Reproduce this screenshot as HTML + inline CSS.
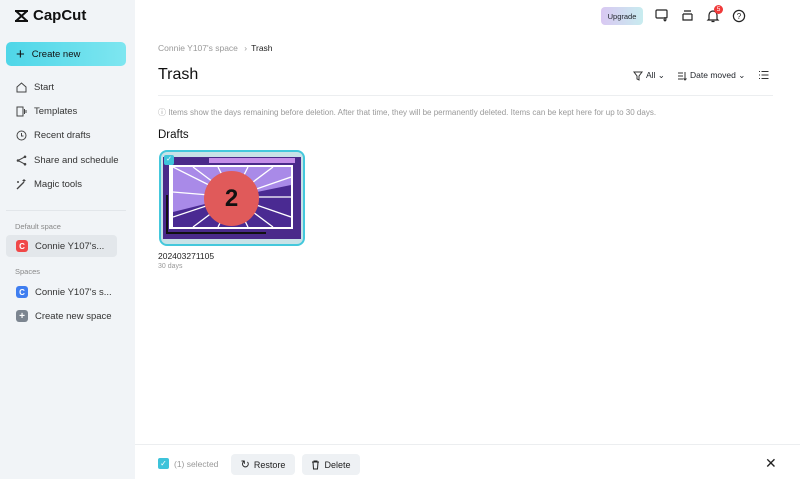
<!DOCTYPE html>
<html><head><style>
*{box-sizing:border-box;margin:0;padding:0}
body{width:800px;height:479px;overflow:hidden;font-family:"Liberation Sans",sans-serif;background:#fff;position:relative;color:#1f2329}
.sb{position:absolute;left:0;top:0;width:135px;height:479px;background:#f1f4f7}
.abs{position:absolute}
.nav{position:absolute;left:16px;font-size:9.5px;color:#333;display:flex;align-items:center}
.nav svg{margin-right:7px}
.sec{position:absolute;left:15px;font-size:7.5px;color:#888}
.av{width:12px;height:12px;border-radius:3px;color:#fff;font-size:8px;font-weight:bold;display:inline-flex;align-items:center;justify-content:center;margin-right:7px}
.btn{position:absolute;top:454px;height:21px;background:#eef1f4;border-radius:4px;font-size:9px;display:flex;align-items:center;justify-content:center;gap:4px;color:#222}
</style></head><body>
<div class="sb">
 <div class="abs" style="left:14px;top:7px;display:flex;align-items:center;font-size:15px;font-weight:bold;color:#111">
  <svg width="15" height="14" viewBox="0 0 15 14"><path d="M1 2h13M1 12h13M2 2l11 10M13 2L2 12" stroke="#111" stroke-width="2" fill="none"/></svg>
  <span style="margin-left:4px">CapCut</span></div>
 <div class="abs" style="left:6px;top:42px;width:120px;height:24px;border-radius:5px;background:linear-gradient(90deg,#4fd6e8,#7ee6f0);font-size:9.5px;display:flex;align-items:center;padding-left:10px;color:#111"><span style="font-size:15px;margin-right:7px;line-height:1">+</span>Create new</div>
 <div class="nav" style="top:82px"><svg width="11" height="11"><path d="M1 5l4.5-4 4.5 4v5H1z" stroke="#444" fill="none"/></svg>Start</div>
 <div class="nav" style="top:106px"><svg width="11" height="11"><rect x="1" y="1" width="6" height="9" stroke="#444" fill="none"/><path d="M8.5 3v5M10 4v3" stroke="#444"/></svg>Templates</div>
 <div class="nav" style="top:130px"><svg width="11" height="11"><circle cx="5.5" cy="5.5" r="4.5" stroke="#444" fill="none"/><path d="M5.5 3v3h2" stroke="#444" fill="none"/></svg>Recent drafts</div>
 <div class="nav" style="top:155px"><svg width="11" height="11"><circle cx="2" cy="5.5" r="1.3" fill="#444"/><circle cx="9" cy="1.8" r="1.3" fill="#444"/><circle cx="9" cy="9.2" r="1.3" fill="#444"/><path d="M2 5.5L9 1.8M2 5.5L9 9.2" stroke="#444"/></svg>Share and schedule</div>
 <div class="nav" style="top:179px"><svg width="11" height="11"><path d="M1 10l7-7" stroke="#444" stroke-width="1.3"/><path d="M8 0v3M6.5 1.5h3M2 2v2M1 3h2" stroke="#444"/></svg>Magic tools</div>
 <div class="abs" style="left:6px;top:210px;width:120px;height:1px;background:#e2e6ea"></div>
 <div class="sec" style="top:222px">Default space</div>
 <div class="abs" style="left:6px;top:235px;width:111px;height:22px;background:#e3e7eb;border-radius:4px"></div>
 <div class="nav" style="top:240px"><span class="av" style="background:#f04848">C</span>Connie Y107's...</div>
 <div class="sec" style="top:267px">Spaces</div>
 <div class="nav" style="top:286px"><span class="av" style="background:#3f7ef0">C</span>Connie Y107's s...</div>
 <div class="nav" style="top:310px"><span class="av" style="background:#7c8590;font-size:10px">+</span>Create new space</div>
</div>

<div class="abs" style="left:601px;top:7px;width:42px;height:18px;border-radius:4px;background:linear-gradient(90deg,#d9c8f2,#c8ecef);font-size:7.5px;display:flex;align-items:center;justify-content:center">Upgrade</div>
<svg class="abs" style="left:655px;top:9px" width="14" height="13"><rect x="1" y="1" width="11" height="8" rx="1" stroke="#222" fill="none" stroke-width="1.2"/><path d="M10 8v4M8.5 10.5l1.5 1.5 1.5-1.5" stroke="#222" fill="none"/></svg>
<svg class="abs" style="left:681px;top:9px" width="13" height="13"><path d="M3 2h7M2 5h9M2 5v6h9V5" stroke="#222" fill="none" stroke-width="1.2"/></svg>
<svg class="abs" style="left:706px;top:9px" width="14" height="14"><path d="M3 10V6a4 4 0 018 0v4l1 1H2zM5.5 12.5h3" stroke="#222" fill="none" stroke-width="1.2"/></svg>
<div class="abs" style="left:714px;top:5px;width:9px;height:9px;border-radius:50%;background:#f03a3a;color:#fff;font-size:6.5px;text-align:center;line-height:9px">5</div>
<svg class="abs" style="left:732px;top:9px" width="14" height="14"><circle cx="7" cy="7" r="5.6" stroke="#222" fill="none" stroke-width="1.2"/><text x="7" y="10" font-size="8" text-anchor="middle" font-family="Liberation Sans" fill="#222">?</text></svg>

<div class="abs" style="left:158px;top:43px;font-size:8.5px;color:#999">Connie Y107's space <span style="margin:0 4px">›</span><span style="color:#222">Trash</span></div>
<div class="abs" style="left:158px;top:66px;font-size:16px;color:#111">Trash</div>
<div class="abs" style="left:633px;top:70px;font-size:8.5px;display:flex;align-items:center;gap:3px"><svg width="10" height="10"><path d="M1 1h8L6 5v4L4 8V5z" stroke="#333" fill="none"/></svg>All ⌄</div>
<div class="abs" style="left:677px;top:70px;font-size:8.5px;display:flex;align-items:center;gap:3px"><svg width="10" height="10"><path d="M1 2h5M1 5h5M1 8h5M8 1v8M6.5 7.5L8 9l1.5-1.5" stroke="#333" fill="none"/></svg>Date moved ⌄</div>
<svg class="abs" style="left:758px;top:70px" width="11" height="10"><path d="M1 1.5h1M1 5h1M1 8.5h1M3.5 1.5h7M3.5 5h7M3.5 8.5h7" stroke="#333"/></svg>
<div class="abs" style="left:158px;top:95px;width:615px;height:1px;background:#eceef0"></div>
<div class="abs" style="left:158px;top:107px;font-size:8px;color:#999">ⓘ Items show the days remaining before deletion. After that time, they will be permanently deleted. Items can be kept here for up to 30 days.</div>
<div class="abs" style="left:158px;top:129px;font-size:11.5px;color:#111">Drafts</div>

<div class="abs" style="left:159px;top:150px;width:146px;height:96px;border:2px solid #44c8dc;border-radius:8px;background:#c8e2e7;overflow:hidden">
 <div class="abs" style="left:2px;top:5px;width:138px;height:82px;background:#4a2a8a"></div>
 <div class="abs" style="left:48px;top:6px;width:86px;height:5px;background:#c48ee8"></div>
 <div class="abs" style="left:8px;top:13px;width:124px;height:64px;background:#fff"></div>
 <svg class="abs" style="left:12px;top:15px" width="118" height="60"><rect width="118" height="60" fill="#4a2a92"/>
 <path d="M0 0h118v18L60 30 0 45z" fill="#a98ae8"/>
 <g stroke="#fff" stroke-width="1.3"><path d="M60 30L0 0M60 30L20 0M60 30L45 0M60 30L75 0M60 30L100 0M60 30L118 10M60 30L118 30M60 30L118 50M60 30L100 60M60 30L75 60M60 30L45 60M60 30L20 60M60 30L0 50M60 30L0 25"/></g></svg>
 <div class="abs" style="left:5px;top:43px;width:2px;height:38px;background:#111"></div>
 <div class="abs" style="left:5px;top:80px;width:100px;height:2px;background:#111"></div>
 <div class="abs" style="left:43px;top:19px;width:55px;height:55px;border-radius:50%;background:#e05a5a;font-size:24px;font-weight:bold;text-align:center;line-height:55px;color:#111">2</div>
 <div class="abs" style="left:3px;top:3px;width:10px;height:10px;border-radius:2px;background:#3ec3da;color:#fff;font-size:7px;text-align:center;line-height:10px">✓</div>
</div>
<div class="abs" style="left:158px;top:251px;font-size:8.5px;color:#222">202403271105</div>
<div class="abs" style="left:158px;top:263px;font-size:7px;color:#999">30 days</div>

<div class="abs" style="left:135px;top:444px;width:665px;height:1px;background:#eceef0"></div>
<div class="abs" style="left:158px;top:458px;width:11px;height:11px;border-radius:2px;background:#3ec3da;color:#fff;font-size:8px;text-align:center;line-height:11px">✓</div>
<div class="abs" style="left:174px;top:459px;font-size:8.5px;color:#999">(1) selected</div>
<div class="btn" style="left:231px;width:64px"><span style="font-size:11px">↻</span>Restore</div>
<div class="btn" style="left:302px;width:58px"><svg width="9" height="10"><path d="M1 2h7M3 2V1h3v1M2 2l.5 7h4L7 2" stroke="#222" fill="none"/></svg>Delete</div>
<div class="abs" style="left:765px;top:455px;font-size:14px;color:#222">✕</div>
</body></html>
